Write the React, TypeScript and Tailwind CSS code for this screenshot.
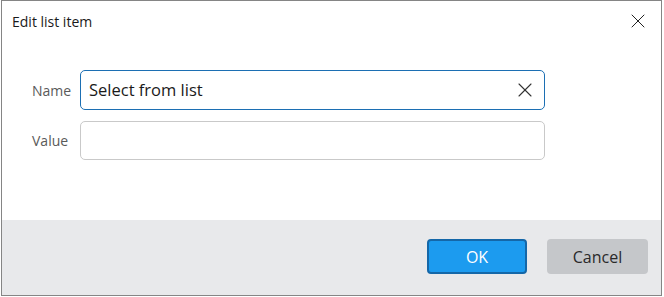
import { X } from 'lucide-react'

export default function App() {
  return (
    <div className="w-[664px] h-[297px] bg-white">
      <div
        className="ml-[1px] w-[661px] h-[296px] border border-[#858585] flex flex-col"
        style={{ fontFamily: '"Open Sans", "Noto Sans", sans-serif' }}
      >
        {/* Title bar */}
        <div className="h-[40px] flex items-center justify-between pl-[10px] pr-[11px]">
          <span className="text-[14px] text-[#1a1a1a]">Edit list item</span>
          <X size={24} strokeWidth={1} className="text-[#222]" />
        </div>

        {/* Form */}
        <div className="flex-1 flex flex-col gap-[11px] pt-[29px] pl-[30px]">
          <div className="flex items-center">
            <span className="w-[48px] text-[14px] text-[#5a5a5a]">Name</span>
            <div className="w-[465px] h-[40px] border border-[#1c6fb3] rounded-[5px] flex items-center justify-between pl-[8px] pr-[7px]">
              <span className="text-[16.5px] text-[#1a1a1a]">Select from list</span>
              <X size={24} strokeWidth={1.1} className="text-[#333]" />
            </div>
          </div>
          <div className="flex items-center">
            <span className="w-[48px] text-[14px] text-[#5a5a5a]">Value</span>
            <div className="w-[465px] h-[39px] border border-[#c9c9c9] rounded-[5px]" />
          </div>
        </div>

        {/* Footer */}
        <div className="h-[75px] bg-[#e8e9eb] flex items-center justify-end gap-[20px] pr-[13px] pb-[2px]">
          <button className="w-[100px] h-[35px] rounded-[4px] bg-[#1c9bef] border-2 border-[#1467a8] text-white text-[16px]">
            OK
          </button>
          <button className="w-[101px] h-[35px] rounded-[4px] bg-[#c5c7ca] text-[#2a2a2a] text-[16px]">
            Cancel
          </button>
        </div>
      </div>
    </div>
  )
}
